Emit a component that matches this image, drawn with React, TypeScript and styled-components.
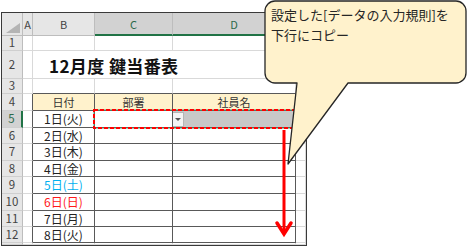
import React from 'react';
import styled, { createGlobalStyle } from 'styled-components';

const GlobalStyle = createGlobalStyle`
  html, body { margin: 0; padding: 0; background: #fff; }
  body { font-family: "Noto Sans CJK JP", "Noto Sans", sans-serif; }
`;

const GRID = '#d9d9d9';
const HEAD_LINE = '#bdbdbd';
const DARK = '#595959';
const GREEN = '#217346';

const Page = styled.div`
  position: relative;
  width: 467px;
  height: 250px;
  overflow: hidden;
  padding: 12px 0 0 1px;
  box-sizing: border-box;
`;

const Sheet = styled.div`
  display: grid;
  width: fit-content;
  grid-template-columns: 21px 10px 62px 78px 123px 10px;
  grid-template-rows: 23px 15px 28px 15px 17px 17px 16px 17px 16px 17px 17px 16px 16px 2px;
  border: 1px solid #3a3a3a;
  background: #fff;
`;

const Base = styled.div<{ $r?: string; $b?: string }>`
  box-sizing: border-box;
  display: flex;
  align-items: center;
  justify-content: center;
  overflow: hidden;
  white-space: nowrap;
  line-height: 1;
  border-right: 1px solid ${(p) => p.$r ?? GRID};
  border-bottom: 1px solid ${(p) => p.$b ?? GRID};
`;

const Corner = styled(Base)`
  background: #e6e6e6;
  align-items: flex-end;
  justify-content: flex-end;
  padding: 0 2px 2px 0;
  border-color: ${HEAD_LINE};
`;

const CornerMark = styled.span`
  width: 14px;
  height: 10px;
  background: #b4b4b4;
  clip-path: polygon(100% 0, 100% 100%, 0 100%);
`;

const ColHead = styled(Base)<{ $sel?: boolean }>`
  background: ${(p) => (p.$sel ? '#d2d2d2' : '#e6e6e6')};
  border-right-color: ${HEAD_LINE};
  border-bottom: ${(p) => (p.$sel ? `2px solid ${GREEN}` : `1px solid ${HEAD_LINE}`)};
  color: ${(p) => (p.$sel ? '#2c6a4a' : '#444')};
  font-size: 11px;
  padding-top: 1px;
`;

const RowHead = styled(Base)<{ $sel?: boolean }>`
  overflow: visible;
  background: ${(p) => (p.$sel ? '#d2d2d2' : '#e6e6e6')};
  border-right: ${(p) => (p.$sel ? `2px solid ${GREEN}` : `1px solid ${HEAD_LINE}`)};
  border-bottom-color: #cfcfcf;
  color: ${(p) => (p.$sel ? '#2c6a4a' : '#444')};
  font-size: 11.5px;
`;

const Cell = styled(Base)<{ $bg?: string; $color?: string }>`
  background: ${(p) => p.$bg ?? '#fff'};
  color: ${(p) => p.$color ?? '#222'};
  font-size: 12px;
`;

const TitleCell = styled(Base)`
  grid-column: span 3;
  justify-content: flex-start;
  align-items: flex-end;
  padding: 0 0 4px 16px;
  font-size: 17px;
  font-weight: 700;
  color: #111;
  letter-spacing: 0.4px;
`;

const HeadCell = styled(Cell)`
  background: #fff2cc;
  font-size: 11px;
  color: #333;
  padding-top: 1px;
`;

const ActiveCell = styled(Cell)`
  justify-content: flex-start;
  background: #c8c8c8;
`;

const DropButton = styled.span`
  box-sizing: border-box;
  width: 12px;
  height: 15px;
  margin-left: -1px;
  background: #f4f4f4;
  border: 1px solid #b5b5b5;
  display: flex;
  align-items: center;
  justify-content: center;
`;

const DropTriangle = styled.span`
  width: 0;
  height: 0;
  border-left: 3px solid transparent;
  border-right: 3px solid transparent;
  border-top: 3px solid #555;
`;

const Marquee = styled.svg`
  position: absolute;
  left: 93px;
  top: 109px;
  overflow: visible;
`;

const Arrow = styled.svg`
  position: absolute;
  left: 274px;
  top: 128px;
  overflow: visible;
`;

const Callout = styled.div`
  position: absolute;
  left: 265px;
  top: 1px;
  width: 201px;
  height: 82px;
  box-sizing: border-box;
  padding: 4px 0 0 6px;
`;

const Bubble = styled.svg`
  position: absolute;
  left: 0;
  top: 0;
  overflow: visible;
`;

const CalloutText = styled.div`
  position: relative;
  font-size: 13px;
  line-height: 19.5px;
  color: #262626;
`;

const dates = [
  { t: '1日(火)' },
  { t: '2日(水)' },
  { t: '3日(木)' },
  { t: '4日(金)' },
  { t: '5日(土)', c: '#00b0f0' },
  { t: '6日(日)', c: '#ff1a1a' },
  { t: '7日(月)' },
  { t: '8日(火)' },
];

const App = (): React.ReactElement => {
  const cols = ['A', 'B', 'C', 'D', ''];

  return (
    <Page>
      <GlobalStyle />
      <Sheet>
        <Corner>
          <CornerMark />
        </Corner>
        {cols.map((c) => (
          <ColHead key={'h' + c} $sel={c === 'C' || c === 'D'}>
            {c}
          </ColHead>
        ))}

        {/* row 1 */}
        <RowHead>1</RowHead>
        <Cell />
        <Cell />
        <Cell />
        <Cell />
        <Cell />

        {/* row 2: title overflows across B:D */}
        <RowHead>2</RowHead>
        <Cell />
        <TitleCell>12月度 鍵当番表</TitleCell>
        <Cell />

        {/* row 3 */}
        <RowHead>3</RowHead>
        <Cell />
        <Cell $b={DARK} />
        <Cell $b={DARK} />
        <Cell $b={DARK} />
        <Cell />

        {/* row 4: table header */}
        <RowHead>4</RowHead>
        <Cell $r={DARK} />
        <HeadCell $r={DARK} $b={DARK}>日付</HeadCell>
        <HeadCell $r={DARK} $b={DARK}>部署</HeadCell>
        <HeadCell $r={DARK} $b={DARK}>社員名</HeadCell>
        <Cell />

        {dates.map((d, i) => (
          <React.Fragment key={d.t}>
            <RowHead $sel={i === 0}>{i + 5}</RowHead>
            <Cell $r={DARK} />
            <Cell $r={DARK} $b={DARK} $color={d.c}>
              {d.t}
            </Cell>
            <Cell $r={DARK} $b={DARK} />
            {i === 0 ? (
              <ActiveCell $r={DARK} $b={DARK}>
                <DropButton>
                  <DropTriangle />
                </DropButton>
              </ActiveCell>
            ) : (
              <Cell $r={DARK} $b={DARK} />
            )}
            <Cell />
          </React.Fragment>
        ))}

        {/* row 13, only its top edge shows */}
        <RowHead />
        <Cell />
        <Cell />
        <Cell />
        <Cell />
        <Cell />
      </Sheet>

      <Marquee width="204" height="20">
        <rect x="1" y="1" width="202" height="18" fill="none" stroke="#3f9b6a" strokeWidth="1" />
        <rect x="1" y="1" width="202" height="18" fill="none" stroke="#ff0000" strokeWidth="2" strokeDasharray="4 2" />
      </Marquee>

      <Arrow width="20" height="112">
        <line x1="10" y1="2" x2="10" y2="104" stroke="#ff0000" strokeWidth="3" />
        <polyline points="3,95 10,106 17,95" fill="none" stroke="#ff0000" strokeWidth="3.5" strokeLinecap="round" />
      </Arrow>

      <Callout>
        <Bubble width="201" height="82">
          <path
            d="M 10,0 H 191 A 10 10 0 0 1 201 10 V 72 A 10 10 0 0 1 191 82 H 83 L 23 163 L 32 82 H 10 A 10 10 0 0 1 0 72 V 10 A 10 10 0 0 1 10 0 Z"
            fill="#fff2cc"
            stroke="#262626"
            strokeWidth="1.3"
            strokeLinejoin="round"
          />
        </Bubble>
        <CalloutText>
          設定した[データの入力規則]を
          <br />
          下行にコピー
        </CalloutText>
      </Callout>
    </Page>
  );
};

export default App;
